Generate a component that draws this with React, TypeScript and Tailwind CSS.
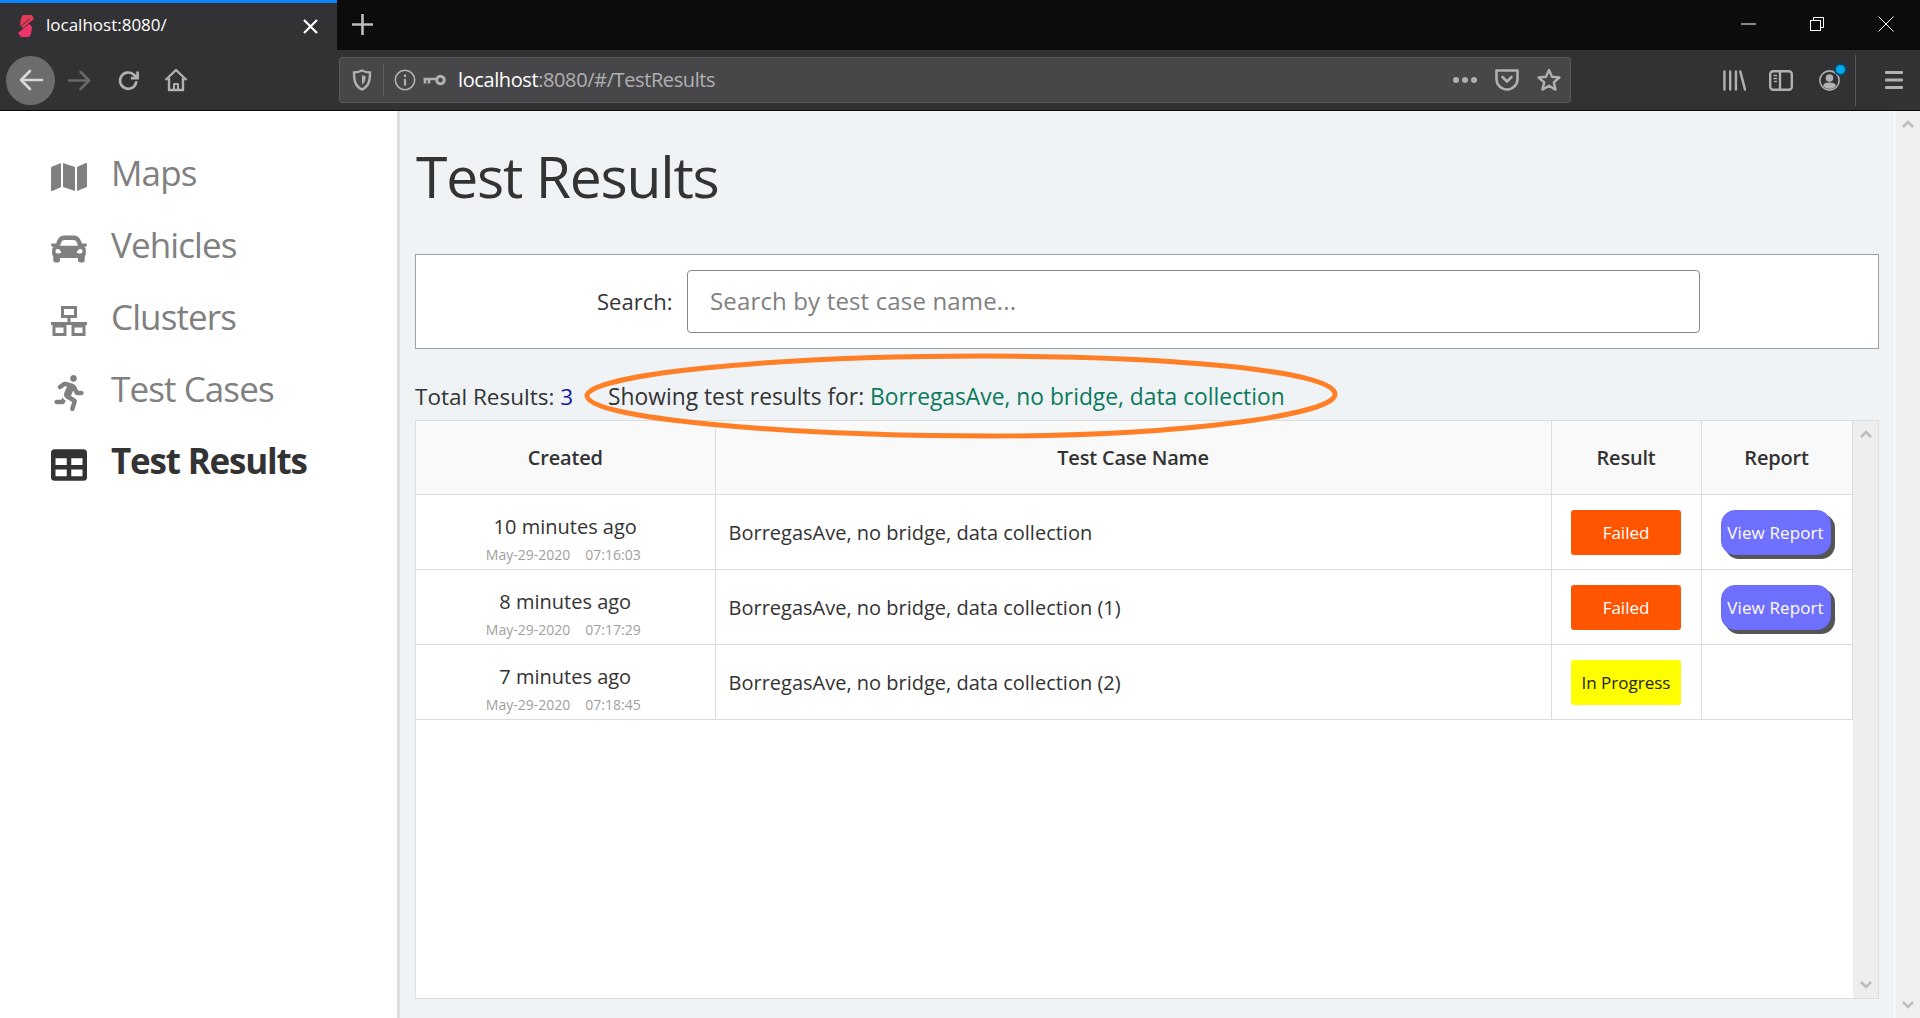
import React from "react";
import { FaMap, FaCar, FaRunning, FaTable } from "react-icons/fa";

const font = { fontFamily: '"Open Sans", "Noto Sans", sans-serif' };

function ClusterIcon({ className }: { className?: string }) {
  return (
    <svg viewBox="0 0 36 30" className={className} fill="none" stroke="currentColor">
      <rect x="11.5" y="1.5" width="13" height="9" strokeWidth="3" />
      <path d="M18 10v7M0 17.5h36" strokeWidth="3" />
      <rect x="3" y="20" width="11" height="8.5" strokeWidth="3" />
      <rect x="22" y="20" width="11" height="8.5" strokeWidth="3" />
    </svg>
  );
}

function NavItem({ icon, label, active }: { icon: React.ReactNode; label: string; active?: boolean }) {
  return (
    <div className={`flex items-center h-[72px] pl-[51px] ${active ? "text-[#333333] font-bold" : "text-[#808080]"}`}>
      <div className="w-[36px] h-[36px] mt-[10px] flex items-center justify-center shrink-0">{icon}</div>
      <span className={`ml-[24px] text-[35px] leading-none ${active ? "tracking-[-1.2px]" : "tracking-[-0.9px]"}`}>{label}</span>
    </div>
  );
}

function Logo() {
  return (
    <svg viewBox="0 0 16 22" className="w-[16px] h-[22px] shrink-0 -mt-[2px]">
      <path d="M5 0h9l2 4-11 9-3-3 1-7z" fill="#e23b5a" />
      <path d="M11 9l3 3-1 7-2 3H3l-3-4z" fill="#f0336b" />
      <path d="M3 11l9-7" stroke="#7a2038" strokeWidth="1" />
    </svg>
  );
}

function TabBar() {
  return (
    <div className="h-[50px] bg-[#0c0c0d] flex items-stretch shrink-0">
      <div className="w-[337px] bg-[#323234] border-t-[3px] border-[#0a84ff] flex items-center pl-[18px] pr-[19px] text-white">
        <Logo />
        <span className="ml-[12px] text-[17px] flex-1 -mt-[3px]">localhost:8080/</span>
        <svg viewBox="0 0 15 15" className="w-[15px] h-[15px]" stroke="white" strokeWidth="2.2">
          <path d="M1 1l13 13M14 1L1 14" />
        </svg>
      </div>
      <div className="ml-[15px] flex items-center pb-[2px]">
        <svg viewBox="0 0 21 21" className="w-[21px] h-[21px]" stroke="#bdbdbd" strokeWidth="2.6">
          <path d="M10.5 0v21M0 10.5h21" />
        </svg>
      </div>
      <div className="flex-1" />
      <div className="flex items-center pr-[26px] pb-[2px]">
        <svg viewBox="0 0 15 2" className="w-[15px] h-[2px]" fill="white">
          <rect width="15" height="1" y="0.5" />
        </svg>
        <svg viewBox="0 0 14 14" className="w-[14px] h-[14px] ml-[54px]" fill="none" stroke="white">
          <rect x="0.5" y="3.5" width="10" height="10" />
          <path d="M3.5 3.5v-3h10v10h-3" />
        </svg>
        <svg viewBox="0 0 16 16" className="w-[16px] h-[16px] ml-[54px]" stroke="white" strokeWidth="1">
          <path d="M0.5 0.5l15 15M15.5 0.5l-15 15" />
        </svg>
      </div>
    </div>
  );
}

function Toolbar() {
  const c = "#b1b1b3";
  return (
    <div className="h-[61px] bg-[#323234] border-b border-[#0c0c0d] flex items-center shrink-0 pl-[6px]">
      <div className="w-[49px] h-[49px] rounded-full bg-[#6c6c6e] flex items-center justify-center">
        <svg viewBox="0 0 26 24" className="w-[26px] h-[24px]" fill="none" stroke="#d8d8d8" strokeWidth="2.6" strokeLinecap="round" strokeLinejoin="round">
          <path d="M24 12H3M12 3l-9 9 9 9" />
        </svg>
      </div>
      <svg viewBox="0 0 26 24" className="w-[25px] h-[23px] ml-[12px]" fill="none" stroke="#6a6a6c" strokeWidth="2.6" strokeLinecap="round" strokeLinejoin="round">
        <path d="M2 12h21M14 3l9 9-9 9" />
      </svg>
      <svg viewBox="0 0 24 24" className="w-[23px] h-[23px] ml-[25px]" fill="none" stroke={c} strokeWidth="2.8" strokeLinecap="round">
        <path d="M20 14a8.5 8.5 0 1 1-3-8.5L21 9" />
        <path d="M21.5 2.5V9.5H14.5" strokeLinecap="butt" />
      </svg>
      <svg viewBox="0 0 24 24" className="w-[24px] h-[24px] ml-[24px]" fill="none" stroke={c} strokeWidth="2.4" strokeLinejoin="round">
        <path d="M1.5 12L12 2l10.5 10M5 10v12h14V10" />
        <path d="M10 22v-6h4v6" strokeWidth="2" />
      </svg>
      <div className="ml-[151px] w-[1232px] h-[46px] rounded-[3px] bg-[#474749] border border-[#59595b] flex items-center pl-[12px] pr-[9px]">
        <svg viewBox="0 0 20 22" className="w-[20px] h-[22px]" fill="none" stroke={c} strokeWidth="2.4">
          <path d="M10 1.5c3 1.5 5.5 2 8 2 0 8-1 13.500-8 17-7-3.500-8-9-8-17 2.500 0 5-.5 8-2z" />
          <path d="M10 6c1.200.6 2.300.9 3.500 1 0 4-.5 6.500-3.500 8.500z" fill={c} stroke="none" />
        </svg>
        <div className="w-px h-[32px] bg-[#5f5f61] ml-[11px]" />
        <svg viewBox="0 0 22 22" className="w-[22px] h-[22px] ml-[10px]" fill="none" stroke={c} strokeWidth="1.6">
          <circle cx="11" cy="11" r="9.700" />
          <path d="M11 10v6.500M11 5.500v2.500" strokeWidth="2.200" />
        </svg>
        <svg viewBox="0 0 24 12" className="w-[24px] h-[12px] ml-[6px]" fill="none" stroke={c}>
          <circle cx="18.500" cy="6" r="3.800" strokeWidth="3" />
          <path d="M14 5H1.500M3 5v4.500M7 5v4.500" strokeWidth="2.600" />
        </svg>
        <span className="ml-[12px] text-[20px] tracking-[-0.4px] text-white leading-none">
          localhost<span className="text-[#b1b1b3]">:8080/#/TestResults</span>
        </span>
        <div className="flex-1" />
        <div className="flex gap-[3px]">
          <div className="w-[6px] h-[6px] rounded-full bg-[#b1b1b3]" />
          <div className="w-[6px] h-[6px] rounded-full bg-[#b1b1b3]" />
          <div className="w-[6px] h-[6px] rounded-full bg-[#b1b1b3]" />
        </div>
        <svg viewBox="0 0 24 22" className="w-[24px] h-[22px] ml-[18px]" fill="none" stroke={c} strokeWidth="2.6" strokeLinejoin="round">
          <path d="M1.500 1.500h21v8.500a10.500 10.500 0 0 1-21 0z" />
          <path d="M7.500 8l4.500 4.500L16.500 8" strokeLinecap="round" />
        </svg>
        <svg viewBox="0 0 24 24" className="w-[24px] h-[24px] ml-[18px]" fill="none" stroke={c} strokeWidth="2.4" strokeLinejoin="round">
          <path d="M12 2l3 6.800 7.400.7-5.600 4.900 1.700 7.200L12 17.800l-6.500 3.800 1.700-7.200L1.600 9.500 9 8.800z" />
        </svg>
      </div>
      <svg viewBox="0 0 24 21" className="w-[23px] h-[21px] ml-[152px]" fill="none" stroke={c} strokeWidth="2.500" strokeLinecap="round">
        <path d="M1.500 1v19M7.500 1v19M13.500 1v19M18 1l5 19" />
      </svg>
      <svg viewBox="0 0 24 21" className="w-[24px] h-[21px] ml-[23px]" fill="none" stroke={c} strokeWidth="2.400">
        <rect x="1.200" y="1.200" width="21.600" height="18.600" rx="3" />
        <path d="M11 1v19" />
        <path d="M4.500 5.500h3.500M4.500 8.500h3.500M5 11.500h3" strokeWidth="1.500" />
      </svg>
      <div className="relative w-[21px] h-[21px] ml-[26px]">
        <svg viewBox="0 0 21 21" className="w-[21px] h-[21px]" fill="none" stroke={c} strokeWidth="1.600">
          <circle cx="10.500" cy="10.500" r="9.600" />
          <circle cx="10.500" cy="8" r="3.800" fill={c} stroke="none" />
          <path d="M4 16c1-3 3-3.500 6.500-3.500S16 13 17 16c-2 2-4 2.800-6.500 2.800S6 18 4 16z" fill={c} stroke="none" />
        </svg>
        <div className="absolute -top-[5px] -right-[5px] w-[9px] h-[9px] rounded-full bg-[#00a8f0] ring-2 ring-[#0a4a66]" />
      </div>
      <div className="w-px h-[51px] bg-[#5a5a5c] ml-[15px]" />
      <svg viewBox="0 0 18 18" className="w-[18px] h-[18px] ml-[29px]" fill={c}>
        <rect width="18" height="3" y="0" rx="1" />
        <rect width="18" height="3" y="7.500" rx="1" />
        <rect width="18" height="3" y="15" rx="1" />
      </svg>
    </div>
  );
}

function Chevron({ dir, className }: { dir: "up" | "down"; className?: string }) {
  return (
    <svg viewBox="0 0 12 8" className={`w-[12px] h-[8px] ${className ?? ""}`} fill="none" stroke="#bdbdbd" strokeWidth="2.600">
      <path d={dir === "up" ? "M1 7l5-5 5 5" : "M1 1l5 5 5-5"} />
    </svg>
  );
}

const rows = [
  { ago: "10 minutes ago", date: "May-29-2020", time: "07:16:03", name: "BorregasAve, no bridge, data collection", status: "Failed" },
  { ago: "8 minutes ago", date: "May-29-2020", time: "07:17:29", name: "BorregasAve, no bridge, data collection (1)", status: "Failed" },
  { ago: "7 minutes ago", date: "May-29-2020", time: "07:18:45", name: "BorregasAve, no bridge, data collection (2)", status: "In Progress" },
];

function ResultsTable() {
  return (
    <table className="table-fixed border-collapse w-[1436px] text-[#333333]">
      <colgroup>
        <col className="w-[299px]" />
        <col className="w-[836px]" />
        <col className="w-[150px]" />
        <col className="w-[151px]" />
      </colgroup>
      <thead>
        <tr className="h-[73px] bg-[#f9f9f9] text-[20px]">
          {["Created", "Test Case Name", "Result", "Report"].map((h) => (
            <th key={h} className="border border-[#dddddd] border-t-0 first:border-l-0 font-semibold tracking-[-0.2px] text-center pt-[2px]">
              {h}
            </th>
          ))}
        </tr>
      </thead>
      <tbody>
        {rows.map((r) => (
          <tr key={r.time} className="h-[75px] bg-white">
            <td className="border border-[#dddddd] border-l-0 text-center align-top pt-[17px]">
              <div className="text-[20px] leading-[30px]">{r.ago}</div>
              <div className="text-[14px] leading-[20px] text-[#a0a0a0] mt-[3px] pr-[4px]">
                {r.date}
                <span className="ml-[15px]">{r.time}</span>
              </div>
            </td>
            <td className="border border-[#dddddd] pl-[13px] pt-[2px] text-[20px]">{r.name}</td>
            <td className="border border-[#dddddd] pt-[2px]">
              <div
                className={`mx-auto w-[110px] h-[45px] rounded-[3px] flex items-center justify-center text-[17px] ${
                  r.status === "Failed" ? "bg-[#ff5500] text-white" : "bg-[#ffff00] text-[#222222]"
                }`}
              >
                {r.status}
              </div>
            </td>
            <td className="border border-[#dddddd] pt-[2px]">
              {r.status === "Failed" && (
                <button className="block ml-[19px] w-[110px] h-[45px] rounded-[14px] bg-[#7070ff] border border-[#6a6aff] text-white text-[17px] tracking-[0.1px] whitespace-nowrap shadow-[4px_4px_0_#555555]">
                  View Report
                </button>
              )}
            </td>
          </tr>
        ))}
      </tbody>
    </table>
  );
}

export default function App() {
  return (
    <div className="h-[1018px] w-full flex flex-col overflow-hidden bg-white" style={font}>
      <TabBar />
      <Toolbar />
      <div className="flex-1 flex min-h-0">
        <aside className="w-[400px] shrink-0 bg-white border-r-[3px] border-[#dedede] pt-[25px]">
          <NavItem icon={<FaMap className="w-[36px] h-[32px]" />} label="Maps" />
          <NavItem icon={<FaCar className="w-[36px] h-[36px]" />} label="Vehicles" />
          <NavItem icon={<ClusterIcon className="w-[36px] h-[30px]" />} label="Clusters" />
          <NavItem icon={<FaRunning className="w-[36px] h-[36px]" />} label="Test Cases" />
          <NavItem icon={<FaTable className="w-[36px] h-[36px]" />} label="Test Results" active />
        </aside>
        <main className="flex-1 min-w-0 bg-[#eff3f6] pl-[15px] pr-[15px] flex flex-col border-r border-white">
          <h1 className="text-[57px] leading-[70px] text-[#333333] font-normal tracking-[-1.2px] mt-[30px] ml-[1px]">Test Results</h1>
          <div className="mt-[43px] h-[95px] bg-white border border-[#a0a0a0] flex items-center shrink-0">
            <span className="ml-[181px] w-[75px] whitespace-nowrap text-[22px] text-[#333333]">Search:</span>
            <div className="ml-[15px] w-[1013px] h-[63px] rounded-[4px] border border-[#888888] flex items-center pl-[22px] pb-[1px] text-[24px] tracking-[0.15px] text-[#808080]">
              Search by test case name...
            </div>
          </div>
          <div className="relative mt-[25px] h-[46px] flex items-center text-[22.5px] text-[#333333] shrink-0">
            <span>
              Total Results: <span className="text-[#1a1aa6]">3</span>
            </span>
            <span className="ml-[35px] text-[22.8px]">
              Showing test results for: <span className="text-[#0b7a5c]">BorregasAve, no bridge, data collection</span>
            </span>
            <svg viewBox="0 0 756 86" className="absolute left-[168px] -top-[21px] w-[756px] h-[86px] pointer-events-none" fill="none" stroke="#ff7f27" strokeWidth="5">
              <path d="M4 42C10 22 180 3 400 3c180 0 350 14 352 38 2 20-150 42-344 42C210 83 0 66 4 42z" />
            </svg>
          </div>
          <div className="flex-1 min-h-0 mb-[19px] flex bg-white border border-[#dddddd]">
            <div className="w-[1437px] shrink-0 bg-white"><ResultsTable /></div>
            <div className="flex-1 bg-[#eeeeee] flex flex-col items-center justify-between py-[9px]">
              <Chevron dir="up" />
              <Chevron dir="down" />
            </div>
          </div>
        </main>
        <div className="w-[25px] shrink-0 bg-[#f0f0f0] flex flex-col items-center justify-between py-[9px]">
          <Chevron dir="up" />
          <Chevron dir="down" />
        </div>
      </div>
    </div>
  );
}
